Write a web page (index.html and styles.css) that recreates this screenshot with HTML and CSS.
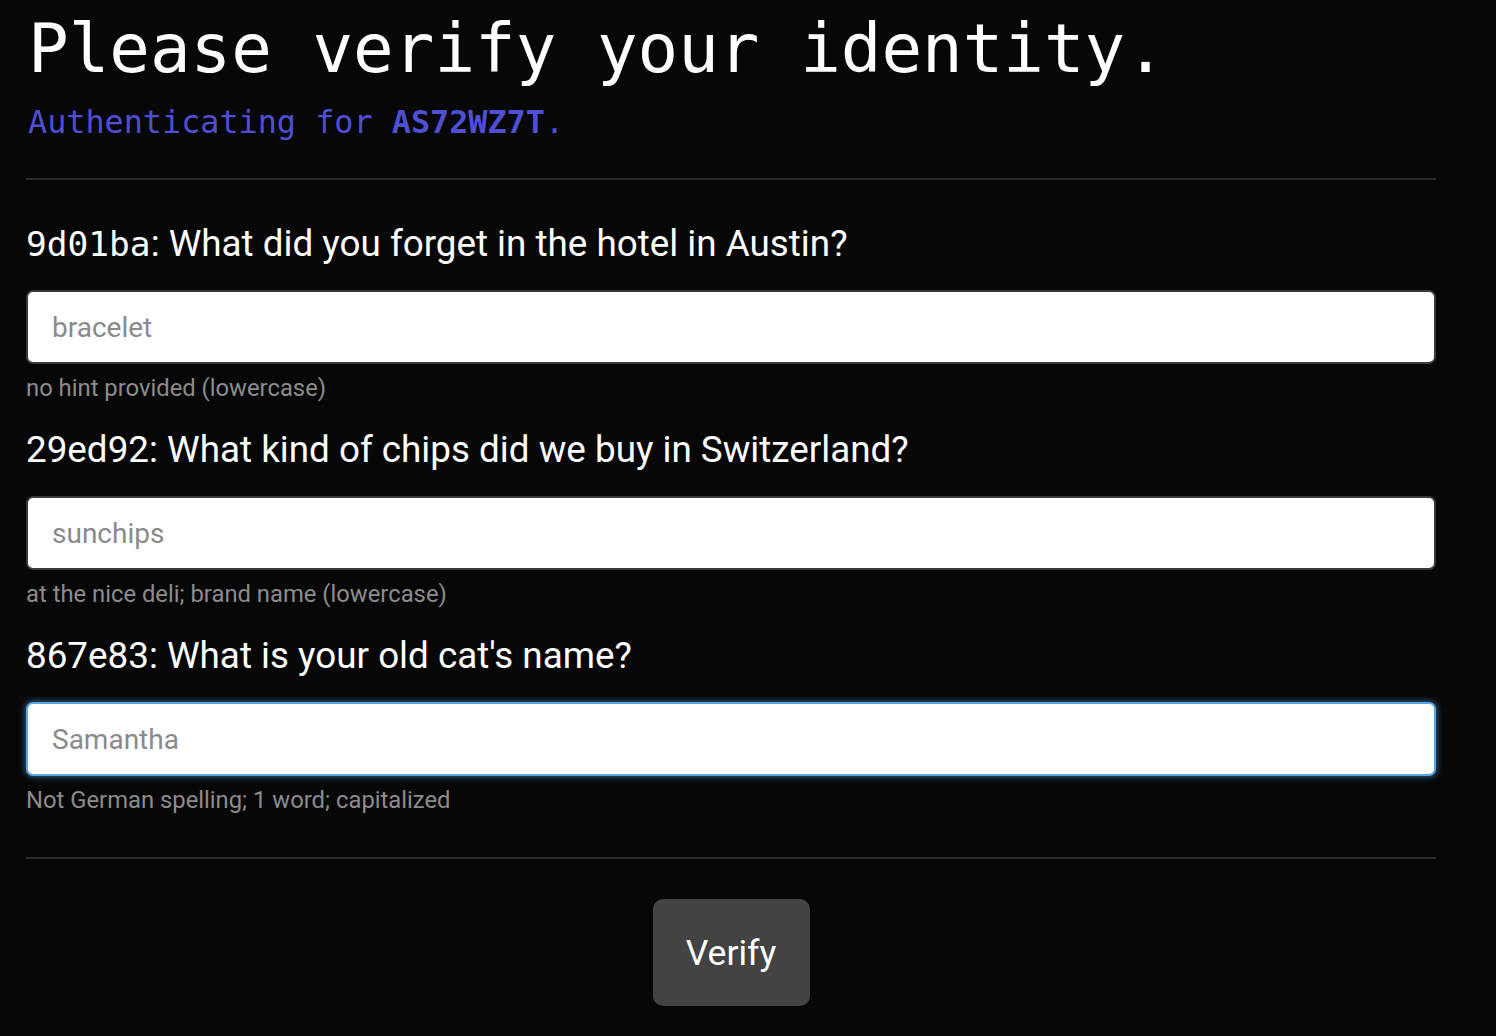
FILE: index.html
```html
<!DOCTYPE html>
<html lang="en">
<head>
<meta charset="utf-8">
<title>Verify identity</title>
<link rel="stylesheet" href="styles.css">
</head>
<body>
<main class="page">
  <header class="intro">
    <h1 class="title">Please verify your identity.</h1>
    <p class="subtitle">Authenticating for <strong>AS72WZ7T</strong>.</p>
  </header>
  <hr class="rule">
  <form class="questions">
    <div class="question">
      <label class="q-label" for="q1"><span class="q-id mono">9d01ba</span>: What did you forget in the hotel in Austin?</label>
      <input class="q-input" id="q1" type="text" placeholder="bracelet">
      <p class="q-hint">no hint provided (lowercase)</p>
    </div>
    <div class="question">
      <label class="q-label" for="q2"><span class="q-id">29ed92</span>: What kind of chips did we buy in Switzerland?</label>
      <input class="q-input" id="q2" type="text" placeholder="sunchips">
      <p class="q-hint">at the nice deli; brand name (lowercase)</p>
    </div>
    <div class="question">
      <label class="q-label" for="q3"><span class="q-id">867e83</span>: What is your old cat's name?</label>
      <input class="q-input is-focused" id="q3" type="text" placeholder="Samantha">
      <p class="q-hint">Not German spelling; 1 word; capitalized</p>
    </div>
    <hr class="rule rule-bottom">
    <div class="actions">
      <button class="verify-btn" type="button">Verify</button>
    </div>
  </form>
</main>
</body>
</html>
```

FILE: styles.css
```css
* { box-sizing: border-box; }

html, body {
  margin: 0;
  padding: 0;
  background: #070707;
  color: #ffffff;
  font-family: Roboto, "Noto Sans", "Liberation Sans", sans-serif;
}

.page {
  padding: 10px 60px 0 26px;
}

.intro {
  margin: 0;
}

.title {
  margin: 0;
  font-family: "DejaVu Sans Mono", "Liberation Mono", monospace;
  font-weight: 400;
  font-size: 67.5px;
  line-height: 78px;
  color: #ffffff;
  padding-left: 2px;
}

.subtitle {
  margin: 10px 0 0 0;
  font-family: "DejaVu Sans Mono", "Liberation Mono", monospace;
  font-size: 31.8px;
  line-height: 48px;
  color: #4f4fd3;
  padding-left: 2px;
}

.subtitle strong {
  font-weight: 700;
}

.rule {
  border: 0;
  height: 2px;
  background: #2b2b2b;
  margin: 32px 0 0 0;
}

.questions {
  display: flex;
  flex-direction: column;
  padding-top: 43px;
}

.question {
  display: flex;
  flex-direction: column;
  margin-bottom: 27px;
}

.q-label {
  font-size: 36.8px;
  line-height: 42px;
  color: #ffffff;
  margin-bottom: 25px;
}

.mono {
  font-family: "DejaVu Sans Mono", "Liberation Mono", monospace;
  font-size: 34.5px;
}

.q-input {
  width: 100%;
  height: 74px;
  border: 2px solid #3a3a3a;
  border-radius: 7px;
  background: #ffffff;
  padding: 0 24px;
  font-family: Roboto, "Noto Sans", sans-serif;
  font-size: 28px;
  color: #333;
  outline: none;
}

.q-input::placeholder {
  color: #8a8a8a;
}

.q-input.is-focused {
  border-color: #5aa7e6;
  box-shadow: 0 0 6px 1px rgba(90, 167, 230, 0.55);
}

.q-hint {
  margin: 10px 0 0 0;
  font-size: 23.8px;
  line-height: 28px;
  color: #8c8c8c;
}

.rule-bottom {
  margin: 16px 0 0 0;
}

.actions {
  display: flex;
  justify-content: center;
  padding-top: 40px;
}

.verify-btn {
  background: #434343;
  color: #ffffff;
  border: 0;
  border-radius: 10px;
  width: 157px;
  height: 107px;
  font-family: Roboto, "Noto Sans", sans-serif;
  font-size: 35.5px;
  padding: 0;
}
```
